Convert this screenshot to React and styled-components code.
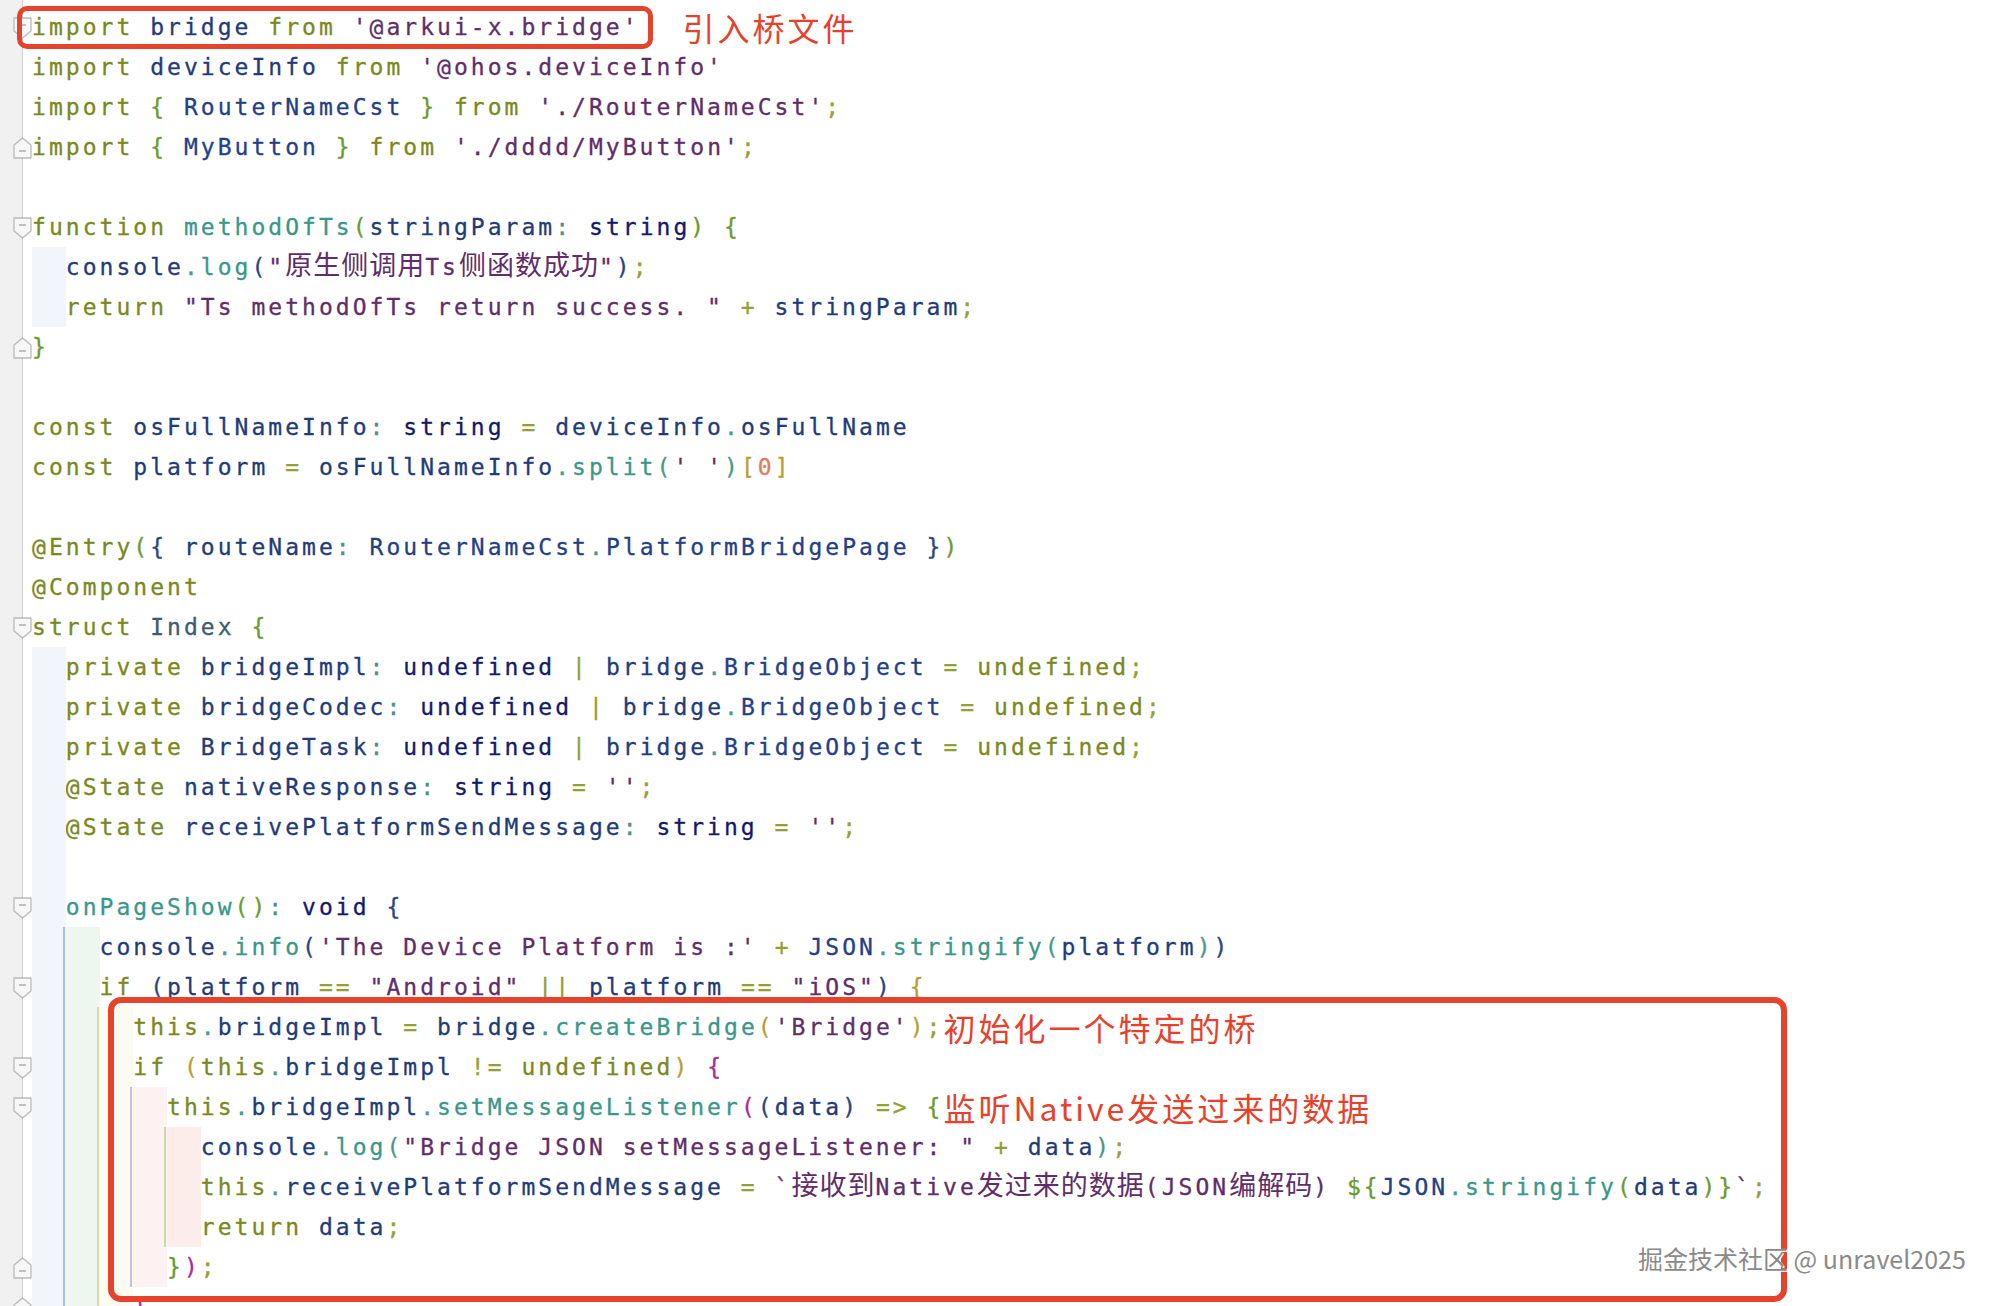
import React from "react";
import styled, { createGlobalStyle } from "styled-components";

const Global = createGlobalStyle`
  html, body { margin: 0; padding: 0; background: #ffffff; }
  #root { width: 100%; }
`;

const COLORS = {
  k: "#7b881e",
  i: "#1f3b7a",
  t: "#13196a",
  f: "#3a978a",
  s: "#5f2d6a",
  n: "#e27a5c",
  o: "#93a032",
  p: "#96a034",
  c: "#4f8f88",
  d: "#4a9a8e",
  cl: "#243f86",
  ix: "#3f5b70",
  bg: "#6b9a2f",
  bn: "#2a4581",
  by: "#b89e36",
  bm: "#ad2896",
  bt: "#4a9884",
};

const LEVEL_FILL = ["transparent", "#f3f5fc", "#eef7ef", "#fafbf1", "#fdf2f1", "#fcedea"];
const LEVEL_LINE = ["transparent", "transparent", "#a9c0da", "#d6dbab", "#d9b7e4", "#c3dda4"];

const Editor = styled.div`
  position: relative;
  display: flex;
  height: 1306px;
  overflow: hidden;
  background: #ffffff;
`;

const Gutter = styled.div`
  position: relative;
  z-index: 1;
  flex: 0 0 22px;
  padding-top: 7px;
  background: #f1f1f1;
  border-right: 1px solid #cdcdcd;
`;

const GutterSlot = styled.div`
  position: relative;
  height: 40px;
`;

const MarkerSvg = styled.svg`
  position: absolute;
  left: 13px;
  top: 10px;
  overflow: visible;
`;

const CodeColumn = styled.div`
  flex: 1;
  padding: 7px 0 0 9px;
`;

const Line = styled.div`
  height: 40px;
  line-height: 40px;
  white-space: pre;
  font-family: "DejaVu Sans Mono", "Noto Sans CJK SC", monospace;
  font-size: 23px;
`;

const Indent = styled.span`
  position: relative;
  display: inline-block;
  width: 33.76px;
  height: 40px;
  vertical-align: top;
  background: ${(p) => LEVEL_FILL[p.$level]};
  &::before {
    content: "";
    position: absolute;
    left: -3px;
    top: 0;
    bottom: 0;
    width: 2px;
    background: ${(p) => LEVEL_LINE[p.$level]};
  }
`;

const Tok = styled.span`
  color: ${(p) => COLORS[p.$c]};
  letter-spacing: 3.03px;
  -webkit-text-stroke: 0.3px currentColor;
`;

const Han = styled.span`
  font-family: "Noto Sans CJK SC", sans-serif;
  font-size: 27px;
  line-height: 1;
  letter-spacing: 1px;
  -webkit-text-stroke: 0;
`;

const Note = styled.span`
  font-family: "Noto Sans CJK SC", "Noto Sans", sans-serif;
  font-size: 32px;
  line-height: 1;
  letter-spacing: 3px;
  color: #e8412b;
  vertical-align: -6px;
  margin-left: ${(p) => p.$gap || 0}px;
`;

const RedBox = styled.div`
  position: absolute;
  box-sizing: border-box;
  border: ${(p) => p.$w}px solid #e6432c;
  border-radius: ${(p) => p.$r}px;
  pointer-events: none;
  z-index: 2;
`;

const Watermark = styled.div`
  position: absolute;
  left: 1638px;
  top: 1243px;
  z-index: 3;
  font-family: "Noto Sans CJK SC", sans-serif;
  font-size: 25px;
  line-height: 30px;
  color: #8a8a8a;
  text-shadow: 0 0 1px #ffffff, 1px 1px 0 #ffffff;
  white-space: nowrap;
`;

const LINES = [
  { d: 0, m: "s", t: [["k", "import "], ["i", "bridge "], ["k", "from "], ["s", "'@arkui-x.bridge'"]], note: "引入桥文件", gap: 43 },
  { d: 0, t: [["k", "import "], ["i", "deviceInfo "], ["k", "from "], ["s", "'@ohos.deviceInfo'"]] },
  { d: 0, t: [["k", "import "], ["bg", "{ "], ["cl", "RouterNameCst "], ["bg", "} "], ["k", "from "], ["s", "'./RouterNameCst'"], ["p", ";"]] },
  { d: 0, m: "e", t: [["k", "import "], ["bg", "{ "], ["cl", "MyButton "], ["bg", "} "], ["k", "from "], ["s", "'./dddd/MyButton'"], ["p", ";"]] },
  { d: 0, t: [] },
  { d: 0, m: "s", t: [["k", "function "], ["f", "methodOfTs"], ["bg", "("], ["i", "stringParam"], ["c", ": "], ["t", "string"], ["bg", ") "], ["bg", "{"]] },
  { d: 1, t: [["i", "console"], ["d", "."], ["f", "log"], ["bn", "("], ["s", "\"原生侧调用Ts侧函数成功\""], ["bn", ")"], ["p", ";"]] },
  { d: 1, t: [["k", "return "], ["s", "\"Ts methodOfTs return success. \" "], ["o", "+ "], ["i", "stringParam"], ["p", ";"]] },
  { d: 0, m: "e", t: [["bg", "}"]] },
  { d: 0, t: [] },
  { d: 0, t: [["k", "const "], ["i", "osFullNameInfo"], ["c", ": "], ["t", "string "], ["o", "= "], ["i", "deviceInfo"], ["d", "."], ["i", "osFullName"]] },
  { d: 0, t: [["k", "const "], ["i", "platform "], ["o", "= "], ["i", "osFullNameInfo"], ["d", "."], ["f", "split"], ["bt", "("], ["s", "' '"], ["bt", ")"], ["by", "["], ["n", "0"], ["by", "]"]] },
  { d: 0, t: [] },
  { d: 0, t: [["k", "@Entry"], ["bg", "("], ["bn", "{ "], ["i", "routeName"], ["c", ": "], ["cl", "RouterNameCst"], ["d", "."], ["cl", "PlatformBridgePage "], ["bn", "}"], ["bg", ")"]] },
  { d: 0, t: [["k", "@Component"]] },
  { d: 0, m: "s", t: [["k", "struct "], ["ix", "Index "], ["bg", "{"]] },
  { d: 1, t: [["k", "private "], ["i", "bridgeImpl"], ["c", ": "], ["t", "undefined "], ["o", "| "], ["i", "bridge"], ["d", "."], ["cl", "BridgeObject "], ["o", "= "], ["k", "undefined"], ["p", ";"]] },
  { d: 1, t: [["k", "private "], ["i", "bridgeCodec"], ["c", ": "], ["t", "undefined "], ["o", "| "], ["i", "bridge"], ["d", "."], ["cl", "BridgeObject "], ["o", "= "], ["k", "undefined"], ["p", ";"]] },
  { d: 1, t: [["k", "private "], ["i", "BridgeTask"], ["c", ": "], ["t", "undefined "], ["o", "| "], ["i", "bridge"], ["d", "."], ["cl", "BridgeObject "], ["o", "= "], ["k", "undefined"], ["p", ";"]] },
  { d: 1, t: [["k", "@State "], ["i", "nativeResponse"], ["c", ": "], ["t", "string "], ["o", "= "], ["s", "''"], ["p", ";"]] },
  { d: 1, t: [["k", "@State "], ["i", "receivePlatformSendMessage"], ["c", ": "], ["t", "string "], ["o", "= "], ["s", "''"], ["p", ";"]] },
  { d: 1, t: [] },
  { d: 1, m: "s", t: [["f", "onPageShow"], ["bg", "()"], ["c", ": "], ["t", "void "], ["bn", "{"]] },
  { d: 2, t: [["i", "console"], ["d", "."], ["f", "info"], ["bn", "("], ["s", "'The Device Platform is :' "], ["o", "+ "], ["cl", "JSON"], ["d", "."], ["f", "stringify"], ["bt", "("], ["i", "platform"], ["bt", ")"], ["bn", ")"]] },
  { d: 2, m: "s", t: [["k", "if "], ["bn", "("], ["i", "platform "], ["o", "== "], ["s", "\"Android\" "], ["o", "|| "], ["i", "platform "], ["o", "== "], ["s", "\"iOS\""], ["bn", ") "], ["by", "{"]] },
  { d: 3, t: [["k", "this"], ["d", "."], ["i", "bridgeImpl "], ["o", "= "], ["i", "bridge"], ["d", "."], ["f", "createBridge"], ["by", "("], ["s", "'Bridge'"], ["by", ")"], ["p", ";"]], note: "初始化一个特定的桥" },
  { d: 3, m: "s", t: [["k", "if "], ["by", "("], ["k", "this"], ["d", "."], ["i", "bridgeImpl "], ["o", "!= "], ["k", "undefined"], ["by", ") "], ["bm", "{"]] },
  { d: 4, m: "s", t: [["k", "this"], ["d", "."], ["i", "bridgeImpl"], ["d", "."], ["f", "setMessageListener"], ["bm", "("], ["bn", "("], ["i", "data"], ["bn", ") "], ["o", "=> "], ["bg", "{"]], note: "监听Native发送过来的数据" },
  { d: 5, t: [["i", "console"], ["d", "."], ["f", "log"], ["bt", "("], ["s", "\"Bridge JSON setMessageListener: \" "], ["o", "+ "], ["i", "data"], ["bt", ")"], ["p", ";"]] },
  { d: 5, t: [["k", "this"], ["d", "."], ["i", "receivePlatformSendMessage "], ["o", "= "], ["s", "`接收到Native发过来的数据(JSON编解码) "], ["bg", "${"], ["cl", "JSON"], ["d", "."], ["f", "stringify"], ["bg", "("], ["i", "data"], ["bg", ")"], ["bg", "}"], ["s", "`"], ["p", ";"]] },
  { d: 5, t: [["k", "return "], ["i", "data"], ["p", ";"]] },
  { d: 4, m: "e", t: [["bg", "}"], ["bm", ")"], ["p", ";"]] },
  { d: 3, m: "e", t: [["bm", "}"]] },
];

const HAN_RE = /([\u3000-\u9fff\uff00-\uffef]+)/;

function renderText(text) {
  return text.split(HAN_RE).map((part, idx) =>
    idx % 2 === 1 ? <Han key={idx}>{part}</Han> : part
  );
}

function FoldMarker({ kind }) {
  const isStart = kind === "s";
  return (
    <MarkerSvg width="19" height="22" viewBox="0 0 19 22">
      <path
        d={isStart ? "M1 1 H18 V14 L9.5 21 L1 14 Z" : "M9.5 1 L18 8 V21 H1 V8 Z"}
        fill="#f7f7f7"
        stroke="#b9b9b9"
        strokeWidth="1.3"
        strokeLinejoin="round"
      />
      <line
        x1="6"
        x2="13"
        y1={isStart ? 8 : 14}
        y2={isStart ? 8 : 14}
        stroke="#a8a8a8"
        strokeWidth="1.4"
      />
    </MarkerSvg>
  );
}

function CodeLine({ line }) {
  const indents = [];
  for (let l = 1; l <= line.d; l++) indents.push(<Indent key={l} $level={l} />);
  return (
    <Line>
      {indents}
      {line.t.map(([c, text], idx) => (
        <Tok key={idx} $c={c}>
          {renderText(text)}
        </Tok>
      ))}
      {line.note ? <Note $gap={line.gap}>{line.note}</Note> : null}
    </Line>
  );
}

export default function App() {
  return (
    <>
      <Global />
      <Editor>
        <Gutter>
          {LINES.map((line, idx) => (
            <GutterSlot key={idx}>{line.m ? <FoldMarker kind={line.m} /> : null}</GutterSlot>
          ))}
        </Gutter>
        <CodeColumn>
          {LINES.map((line, idx) => (
            <CodeLine key={idx} line={line} />
          ))}
        </CodeColumn>
        <RedBox $w={5} $r={10} style={{ left: 17, top: 6, width: 636, height: 43 }} />
        <RedBox $w={6} $r={13} style={{ left: 108, top: 997, width: 1679, height: 305 }} />
        <Watermark>掘金技术社区 @ unravel2025</Watermark>
      </Editor>
    </>
  );
}
